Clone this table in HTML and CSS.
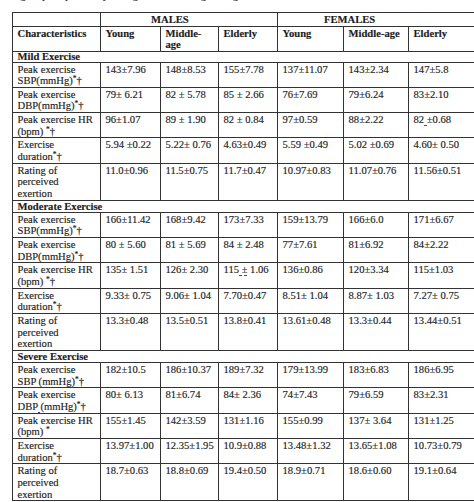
FILE: index.html
```html
<!DOCTYPE html>
<html>
<head>
<meta charset="utf-8">
<link rel="stylesheet" href="styles.css">
</head>
<body>
<div class="caption"><div class="caption-text">group respectively; † significant change in age</div></div>
<table class="data">
<colgroup>
<col class="c1"><col class="c2"><col class="c3"><col class="c4"><col class="c5"><col class="c6"><col class="c7">
</colgroup>
<tr class="h1"><td></td><td colspan="3" class="grp males">MALES</td><td colspan="3" class="grp females">FEMALES</td></tr>
<tr class="h2"><td>Characteristics</td><td>Young</td><td>Middle-<br>age</td><td>Elderly</td><td>Young</td><td>Middle-age</td><td class="lt">Elderly</td></tr>

<tr class="sec first"><td colspan="7">Mild Exercise</td></tr>
<tr><td>Peak exercise<br>SBP(mmHg)<sup>*</sup>†</td><td>143±7.96</td><td>148±8.53</td><td>155±7.78</td><td>137±11.07</td><td>143±2.34</td><td class="lt">147±5.8</td></tr>
<tr><td>Peak exercise<br>DBP(mmHg)<sup>*</sup>†</td><td>79± 6.21</td><td>82 ± 5.78</td><td>85 ± 2.66</td><td>76±7.69</td><td>79±6.24</td><td class="lt">83±2.10</td></tr>
<tr><td>Peak exercise HR<br>(bpm) <sup>*</sup>†</td><td>96±1.07</td><td>89 ± 1.90</td><td>82 ± 0.84</td><td>97±0.59</td><td>88±2.22</td><td class="lt">82<span class="sq"> </span>±0.68</td></tr>
<tr><td>Exercise<br>duration<sup>*</sup>†</td><td>5.94 ±0.22</td><td>5.22± 0.76</td><td>4.63±0.49</td><td>5.59 ±0.49</td><td>5.02 ±0.69</td><td class="lt">4.60± 0.50</td></tr>
<tr class="r3"><td>Rating of<br>perceived<br>exertion</td><td>11.0±0.96</td><td>11.5±0.75</td><td>11.7±0.47</td><td>10.97±0.83</td><td>11.07±0.76</td><td class="lt">11.56±0.51</td></tr>

<tr class="sec"><td colspan="7">Moderate Exercise</td></tr>
<tr><td>Peak exercise<br>SBP(mmHg)<sup>*</sup>†</td><td>166±11.42</td><td>168±9.42</td><td>173±7.33</td><td>159±13.79</td><td>166±6.0</td><td class="lt">171±6.67</td></tr>
<tr><td>Peak exercise<br>DBP(mmHg)<sup>*</sup>†</td><td>80 ± 5.60</td><td>81 ± 5.69</td><td>84 ± 2.48</td><td>77±7.61</td><td>81±6.92</td><td class="lt">84±2.22</td></tr>
<tr><td>Peak exercise HR<br>(bpm) <sup>*</sup>†</td><td>135± 1.51</td><td>126± 2.30</td><td>115<span class="sq"> ±</span> 1.06</td><td>136±0.86</td><td>120±3.34</td><td class="lt">115±1.03</td></tr>
<tr><td>Exercise<br>duration<sup>*</sup>†</td><td>9.33± 0.75</td><td>9.06± 1.04</td><td>7.70±0.47</td><td>8.51± 1.04</td><td>8.87± 1.03</td><td class="lt">7.27± 0.75</td></tr>
<tr class="r3"><td>Rating of<br>perceived<br>exertion</td><td>13.3±0.48</td><td>13.5±0.51</td><td>13.8±0.41</td><td>13.61±0.48</td><td>13.3±0.44</td><td class="lt">13.44±0.51</td></tr>

<tr class="sec"><td colspan="7">Severe Exercise</td></tr>
<tr><td>Peak exercise<br>SBP (mmHg)<sup>*</sup>†</td><td>182±10.5</td><td>186±10.37</td><td>189±7.32</td><td>179±13.99</td><td>183±6.83</td><td class="lt">186±6.95</td></tr>
<tr><td>Peak exercise<br>DBP<span class="sq"> </span>(mmHg)<sup>*</sup>†</td><td>80± 6.13</td><td>81±6.74</td><td>84± 2.36</td><td>74±7.43</td><td>79±6.59</td><td class="lt">83±2.31</td></tr>
<tr><td>Peak exercise HR<br>(bpm) <sup>*</sup></td><td>155±1.45</td><td>142±3.59</td><td>131±1.16</td><td>155±0.99</td><td>137± 3.64</td><td class="lt">131±1.25</td></tr>
<tr><td>Exercise<br>duration<sup>*</sup>†</td><td>13.97±1.00</td><td>12.35±1.95</td><td>10.9±0.88</td><td>13.48±1.32</td><td>13.65±1.08</td><td class="lt">10.73±0.79</td></tr>
<tr class="r3"><td>Rating of<br>perceived<br>exertion</td><td>18.7±0.63</td><td>18.8±0.69</td><td>19.4±0.50</td><td>18.9±0.71</td><td>18.6±0.60</td><td class="lt">19.1±0.64</td></tr>
</table>
</body>
</html>
```
FILE: styles.css
```css
html, body {
  margin: 0;
  padding: 0;
  background: #ffffff;
}
body {
  font-family: "Liberation Serif", "Times New Roman", serif;
  font-size: 10.6px;
  color: #1c1c1c;
  padding-left: 12px;
  overflow: hidden;
}
.caption {
  height: 12px;
  overflow: hidden;
}
.caption-text {
  margin-top: -12px;
  padding-left: 8px;
  font-size: 12px;
  line-height: 13px;
  white-space: nowrap;
}
.data {
  border-collapse: collapse;
  table-layout: fixed;
  width: 462px;
}
.c1 { width: 88px; }
.c2 { width: 60px; }
.c3 { width: 58px; }
.c4 { width: 59px; }
.c5 { width: 66px; }
.c6 { width: 65px; }
.c7 { width: 66px; }
.data td {
  border: 1px solid #333333;
  padding: 1px 2px 0 4.5px;
  vertical-align: top;
  line-height: 11.65px;
  white-space: nowrap;
  -webkit-text-stroke: 0.15px #1c1c1c;
}
.data td.lt {
  border-left-color: #9a9a9a;
}
.h1 td {
  padding-top: 0;
  line-height: 13px;
  font-weight: bold;
}
.h1 td.males { padding-left: 50px; }
.h1 td.females { padding-left: 46px; }
.h2 td {
  font-weight: bold;
  line-height: 11.5px;
  padding-top: 0.5px;
}
.sec td {
  font-weight: bold;
  padding-top: 0;
  line-height: 11px;
}
.sec.first td { line-height: 10px; }
sup {
  font-size: 7.5px;
  line-height: 0;
  vertical-align: 3px;
}
.sq {
  border-bottom: 1px dashed #3a3ad8;
}
```
